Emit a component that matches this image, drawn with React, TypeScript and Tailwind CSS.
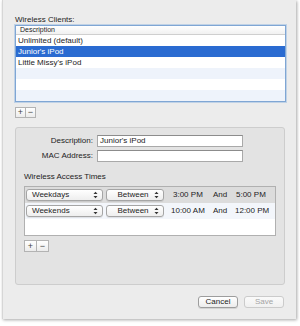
import React from 'react';

// small mac-style up/down arrows used in popup buttons
const Arrows: React.FC = () => (
  <svg width="5" height="8" viewBox="0 0 5 8" className="shrink-0">
    <path d="M0.5 3 L2.5 0.8 L4.5 3 Z" fill="#333" />
    <path d="M0.5 5 L2.5 7.2 L4.5 5 Z" fill="#333" />
  </svg>
);

const Popup: React.FC<{ label: string; w: string; center?: boolean }> = ({ label, w, center }) => (
  <div
    className={`${w} h-[12px] flex items-center rounded-[3px] border border-[#a5a5a5] bg-linear-to-b from-white to-[#eeeeee] shadow-[0_1px_0_rgba(0,0,0,0.08)] pl-[5px] pr-[4px] leading-[10px]`}
  >
    <span className={center ? 'flex-1 text-center' : 'flex-1'}>{label}</span>
    <Arrows />
  </div>
);

const PlusMinus: React.FC<{ size: string }> = ({ size }) => (
  <div className="flex">
    <div
      className={`${size} flex items-center justify-center border border-[#b3b3b3] bg-linear-to-b from-white to-[#ececec] text-[9px] leading-none text-[#444]`}
    >
      +
    </div>
    <div
      className={`${size} -ml-px flex items-center justify-center border border-[#b3b3b3] bg-linear-to-b from-white to-[#ececec] text-[9px] leading-none text-[#444]`}
    >
      −
    </div>
  </div>
);

const clients = ['Unlimited (default)', "Junior's iPod", "Little Missy's iPod", '', '', ''];

const App: React.FC = () => {
  return (
    <div className="w-[300px] h-[326px] bg-white font-['Liberation_Sans',Arial,sans-serif] text-[8px] text-[#1c1c1c]">
      <div className="ml-[2px] w-[294px] h-[319px] bg-[#ececec] border-l border-[#d6d6d6] shadow-[1px_1px_3px_rgba(0,0,0,0.35)] flex flex-col pl-[12px] pr-[10px]">
        <div className="mt-[15px] h-[10px] leading-[10px]">Wireless Clients:</div>

        {/* clients table */}
        <div className="w-[271px] h-[77px] border border-[#7fa6d4] shadow-[0_0_0_1px_rgba(140,180,225,0.45)] bg-white flex flex-col">
          <div className="h-[9px] border-b border-[#cfcfcf] bg-linear-to-b from-white to-[#f1f1f1] text-[7px] leading-[8px] pl-[4px]">
            Description
          </div>
          {clients.map((c, i) => (
            <div
              key={i}
              className={
                i === 1
                  ? 'h-[11px] leading-[11px] pl-[2px] bg-[#2a6bd1] text-white'
                  : i % 2 === 1
                  ? 'h-[11px] leading-[11px] pl-[2px] bg-[#eef3fb]'
                  : 'h-[11px] leading-[11px] pl-[2px]'
              }
            >
              {c}
            </div>
          ))}
        </div>

        <div className="mt-[5px]">
          <PlusMinus size="w-[11px] h-[11px]" />
        </div>

        {/* detail group box */}
        <div className="mt-[9px] w-[270px] h-[158px] rounded-[3px] border border-[#cdcdcd] bg-[#e3e3e3] flex flex-col">
          <div className="mt-[7px] flex items-center">
            <div className="w-[77px] text-right">Description:</div>
            <div className="ml-[4px] w-[146px] h-[12px] border border-[#a9a9a9] border-t-[#8c8c8c] bg-white pl-[2px] leading-[10px]">
              Junior's iPod
            </div>
          </div>
          <div className="mt-[3px] flex items-center">
            <div className="w-[77px] text-right">MAC Address:</div>
            <div className="ml-[4px] w-[146px] h-[12px] border border-[#a9a9a9] border-t-[#8c8c8c] bg-white" />
          </div>

          <div className="pl-[8px] flex flex-col">
            <div className="mt-[10px] h-[10px] leading-[10px]">Wireless Access Times</div>
            <div className="mt-[4px] w-[252px] h-[50px] border border-[#b0b0b0] bg-white flex flex-col">
              <div className="h-[16px] bg-[#dcdcdc] flex items-center pl-[1px]">
                <Popup label="Weekdays" w="w-[77px]" />
                <div className="ml-[3px]">
                  <Popup label="Between" w="w-[58px]" center />
                </div>
                <span className="ml-[9px] w-[40px]">3:00 PM</span>
                <span className="w-[23px]">And</span>
                <span>5:00 PM</span>
              </div>
              <div className="h-[16px] bg-[#f3f6fb] flex items-center pl-[1px]">
                <Popup label="Weekends" w="w-[77px]" />
                <div className="ml-[3px]">
                  <Popup label="Between" w="w-[58px]" center />
                </div>
                <span className="ml-[7px] w-[42px]">10:00 AM</span>
                <span className="w-[22px]">And</span>
                <span>12:00 PM</span>
              </div>
            </div>
            <div className="mt-[4px]">
              <PlusMinus size="w-[13px] h-[12px]" />
            </div>
          </div>
        </div>

        <div className="mt-[11px] w-[271px] flex justify-end gap-[6px] pr-[2px]">
          <div className="w-[40px] h-[12px] rounded-[3px] border border-[#9d9d9d] bg-linear-to-b from-white to-[#ececec] shadow-[0_1px_0_rgba(0,0,0,0.1)] flex items-center justify-center leading-[10px]">
            Cancel
          </div>
          <div className="w-[40px] h-[12px] rounded-[3px] border border-[#cbcbcb] bg-linear-to-b from-[#fafafa] to-[#f0f0f0] flex items-center justify-center leading-[10px] text-[#a4a4a4]">
            Save
          </div>
        </div>
      </div>
    </div>
  );
};

export default App;
